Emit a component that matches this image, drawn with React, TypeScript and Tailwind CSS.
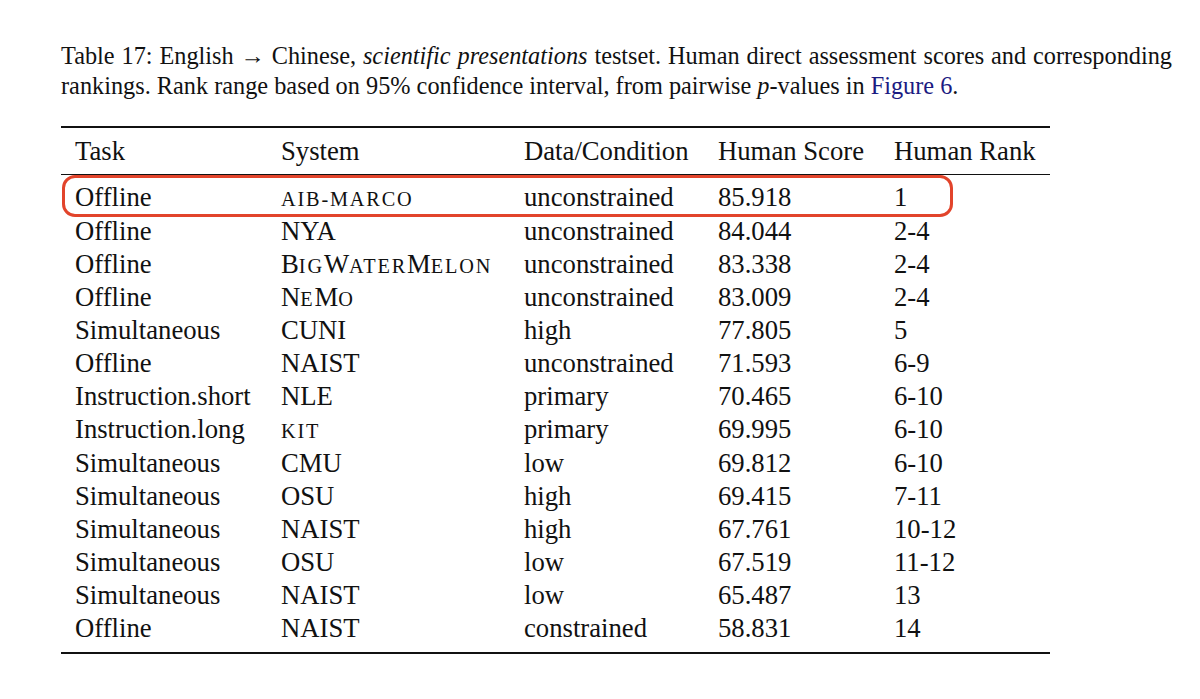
import React from "react";

type Row = {
  task: string;
  system: string;
  data: string;
  score: string;
  rank: string;
};

// lowercase runs render as small caps, like \textsc in the paper
const rows: Row[] = [
  { task: "Offline", system: "aib-marco", data: "unconstrained", score: "85.918", rank: "1" },
  { task: "Offline", system: "NYA", data: "unconstrained", score: "84.044", rank: "2-4" },
  { task: "Offline", system: "BigWaterMelon", data: "unconstrained", score: "83.338", rank: "2-4" },
  { task: "Offline", system: "NeMo", data: "unconstrained", score: "83.009", rank: "2-4" },
  { task: "Simultaneous", system: "CUNI", data: "high", score: "77.805", rank: "5" },
  { task: "Offline", system: "NAIST", data: "unconstrained", score: "71.593", rank: "6-9" },
  { task: "Instruction.short", system: "NLE", data: "primary", score: "70.465", rank: "6-10" },
  { task: "Instruction.long", system: "kit", data: "primary", score: "69.995", rank: "6-10" },
  { task: "Simultaneous", system: "CMU", data: "low", score: "69.812", rank: "6-10" },
  { task: "Simultaneous", system: "OSU", data: "high", score: "69.415", rank: "7-11" },
  { task: "Simultaneous", system: "NAIST", data: "high", score: "67.761", rank: "10-12" },
  { task: "Simultaneous", system: "OSU", data: "low", score: "67.519", rank: "11-12" },
  { task: "Simultaneous", system: "NAIST", data: "low", score: "65.487", rank: "13" },
  { task: "Offline", system: "NAIST", data: "constrained", score: "58.831", rank: "14" },
];

const SmallCaps = ({ text }: { text: string }) => {
  const parts: { big: boolean; s: string }[] = [];
  for (const ch of text) {
    const big = ch >= "A" && ch <= "Z";
    const last = parts[parts.length - 1];
    if (last && last.big === big) last.s += ch;
    else parts.push({ big, s: ch });
  }
  return (
    <span>
      {parts.map((p, i) =>
        p.big ? (
          <span key={i}>{p.s}</span>
        ) : (
          <span key={i} className="text-[0.76em] tracking-[0.09em]">
            {p.s.toUpperCase()}
          </span>
        )
      )}
    </span>
  );
};

const cols = "grid grid-cols-[206px_243px_194px_176px_170px]";

const Cells = ({ row }: { row: Row }) => (
  <>
    <div className="pl-[14px] whitespace-nowrap">{row.task}</div>
    <div className="pl-[14px] whitespace-nowrap">
      <SmallCaps text={row.system} />
    </div>
    <div className="pl-[14px]">{row.data}</div>
    <div className="pl-[14px]">{row.score}</div>
    <div className="pl-[14px]">{row.rank}</div>
  </>
);

export default function App() {
  return (
    <div className="min-h-screen bg-white text-[#111] font-['Liberation_Serif','Times_New_Roman',serif]">
      <div className="pl-[61px] pt-[41px]">
        <div className="w-[1111px] text-[24.3px] leading-[30px]">
          <div className="text-justify [text-align-last:justify] whitespace-nowrap">
            Table 17: English → Chinese, <i>scientific presentations</i> testset. Human direct
            assessment scores and corresponding
          </div>
          <div>
            rankings. Rank range based on 95% confidence interval, from pairwise{" "}
            <i>p</i>-values in <span className="text-[#1b1b82]">Figure 6</span>.
          </div>
        </div>

        <div className="mt-[25px] w-[989px] text-[26.7px]">
          <div className={`${cols} h-[49px] items-center border-t-2 border-b border-[#111] leading-[33px]`}>
            <div className="pl-[14px]">Task</div>
            <div className="pl-[14px]">System</div>
            <div className="pl-[14px] whitespace-nowrap">Data/Condition</div>
            <div className="pl-[14px] whitespace-nowrap">Human Score</div>
            <div className="pl-[14px] whitespace-nowrap">Human Rank</div>
          </div>

          <div className="pt-[6.4px] pb-[6.5px] border-b-2 border-[#111]">
            {rows.map((row, i) => (
              <div key={i} className={`${cols} relative h-[33.15px] leading-[33.15px]`}>
                {i === 0 && (
                  <div className="absolute left-[1px] top-[-6.4px] w-[891px] h-[42px] rounded-[13px] border-[3px] border-[#e2442b] pointer-events-none" />
                )}
                <Cells row={row} />
              </div>
            ))}
          </div>
        </div>
      </div>
    </div>
  );
}
